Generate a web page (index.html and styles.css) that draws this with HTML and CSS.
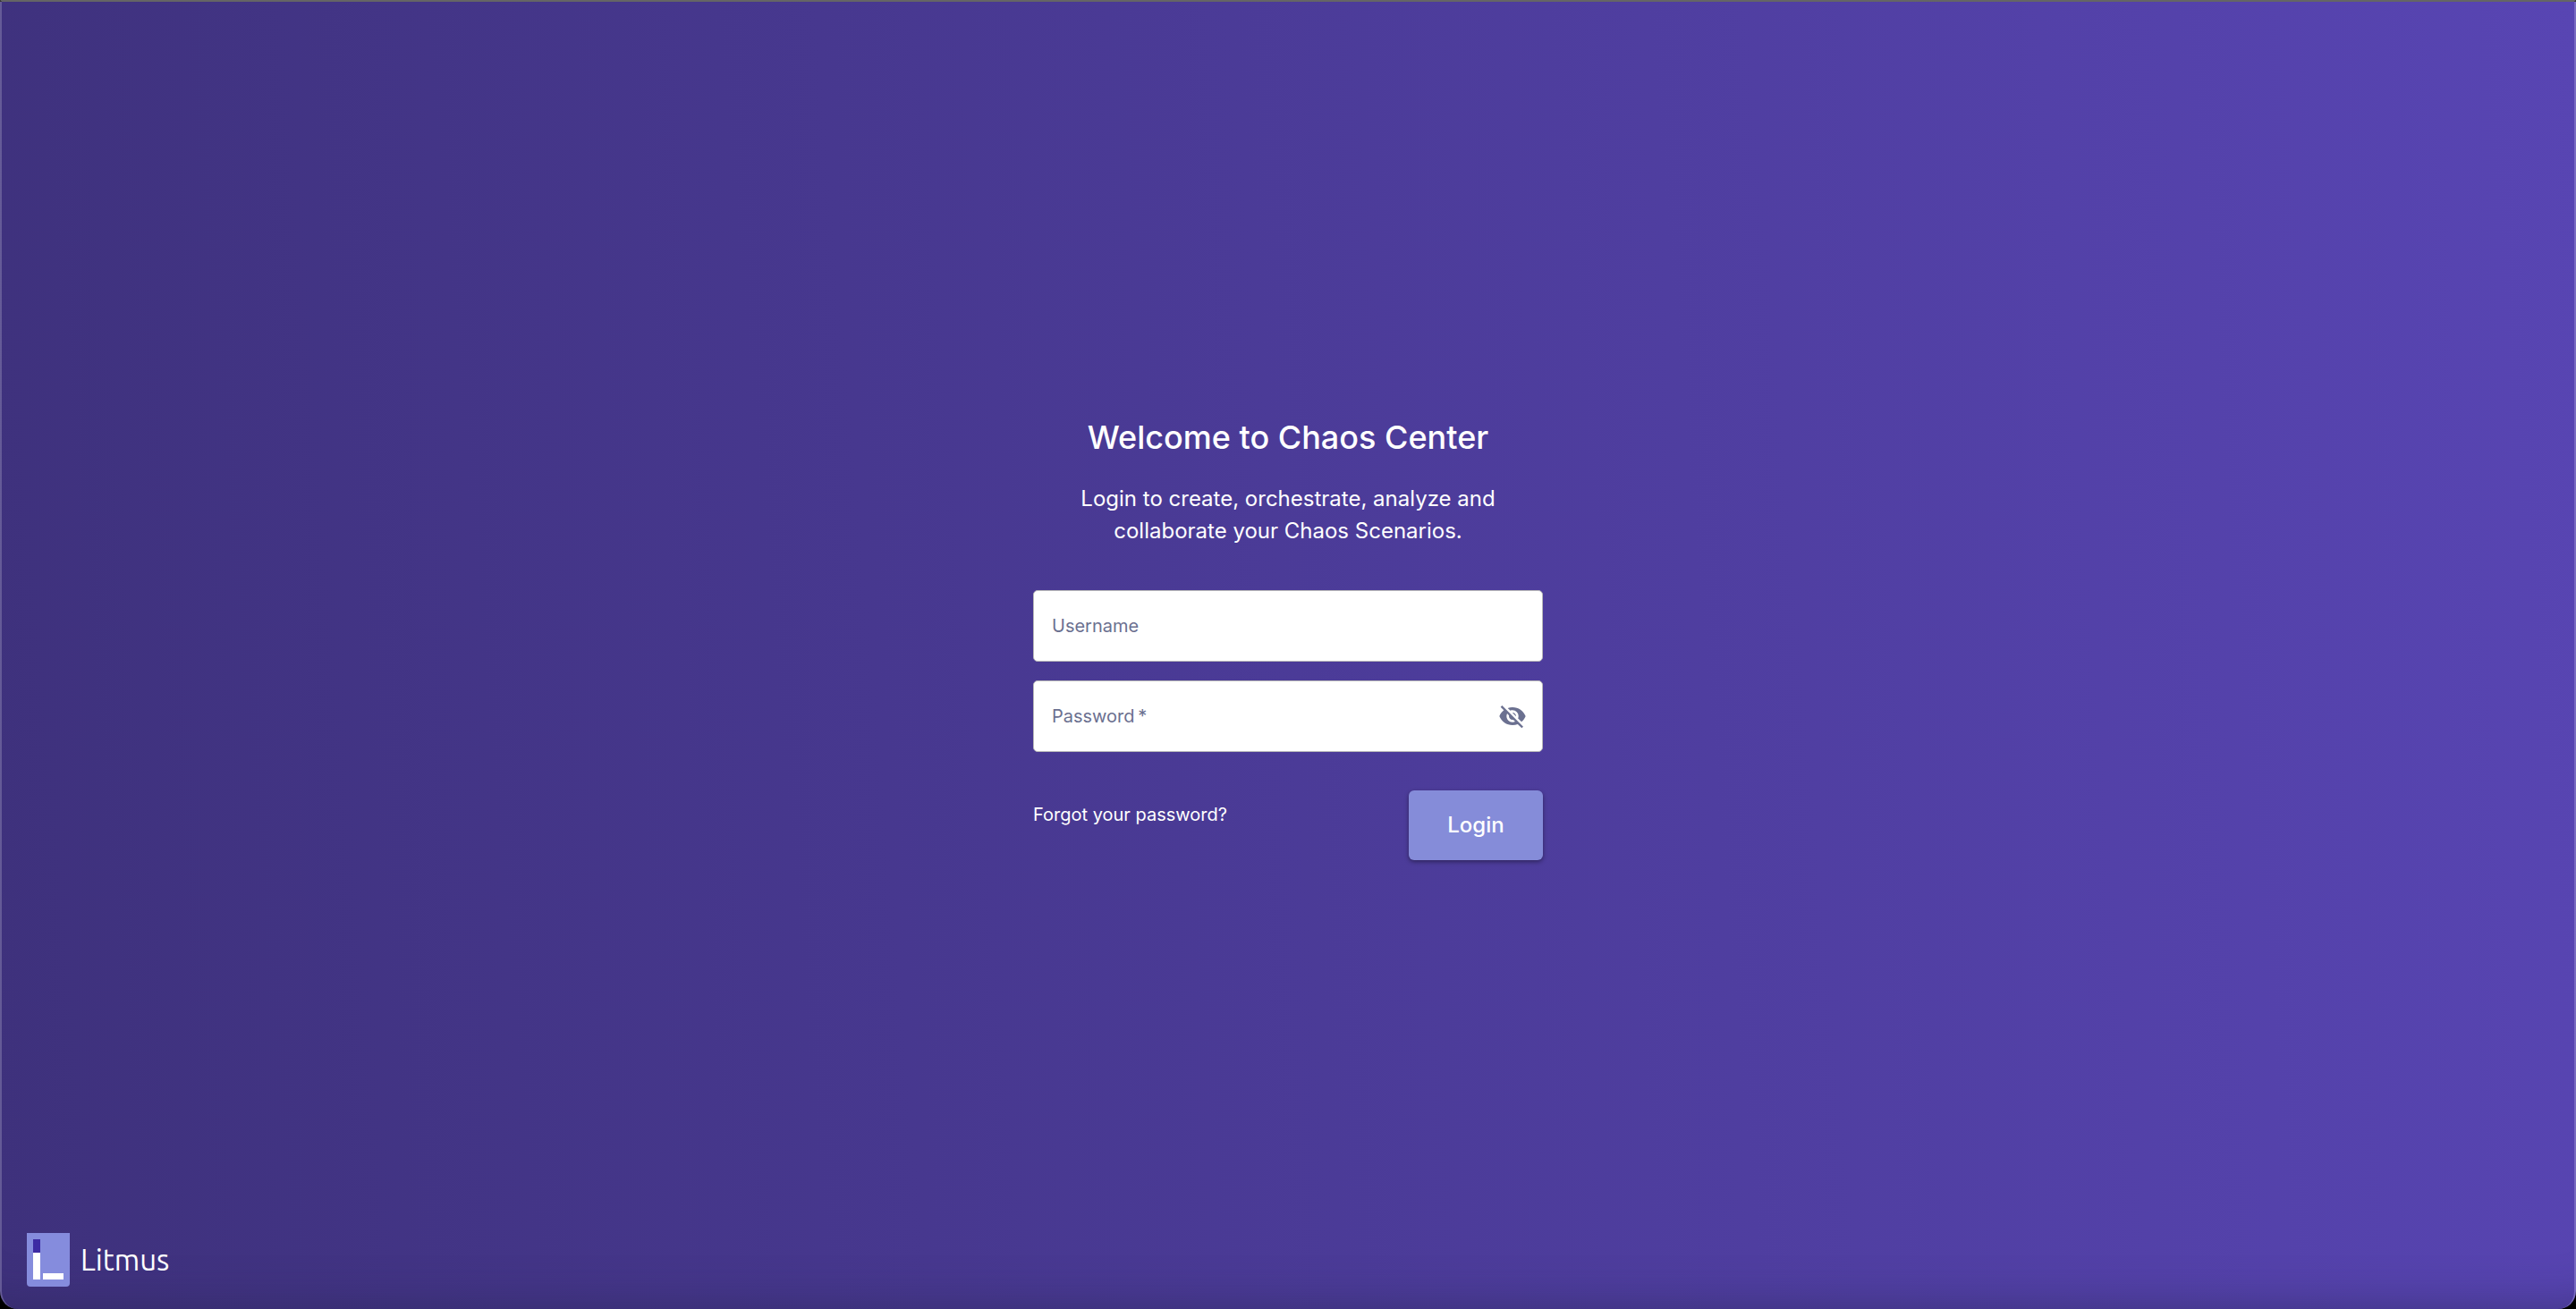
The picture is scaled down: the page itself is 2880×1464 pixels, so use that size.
FILE: index.html
```html
<!DOCTYPE html>
<html lang="en">
<head>
<meta charset="utf-8">
<meta name="viewport" content="width=device-width, initial-scale=1">
<title>Litmus Chaos Center</title>
<link rel="stylesheet" href="styles.css">
</head>
<body>
<div class="page">
  <main class="login">
    <h1 class="title">Welcome to Chaos Center</h1>
    <p class="subtitle">Login to create, orchestrate, analyze and<br>collaborate your Chaos Scenarios.</p>
    <form class="form">
      <div class="field">
        <input class="field-input" id="username" type="text" placeholder=" ">
        <label class="field-label" for="username">Username</label>
      </div>
      <div class="field">
        <input class="field-input" id="password" type="password" placeholder=" " required>
        <label class="field-label" for="password">Password&#8201;*</label>
        <button class="toggle" type="button" aria-label="Show password">
          <svg class="toggle-icon" viewBox="0 0 24 24" aria-hidden="true"><path d="M12 7c2.760 0 5 2.240 5 5 0 .650-.130 1.260-.360 1.830l2.920 2.920c1.510-1.260 2.700-2.890 3.430-4.750-1.730-4.390-6-7.500-11-7.500-1.400 0-2.740.250-3.980.700l2.160 2.160C10.740 7.130 11.350 7 12 7zM2 4.270l2.280 2.280.460.460C3.080 8.300 1.780 10.020 1 12c1.730 4.390 6 7.500 11 7.500 1.550 0 3.030-.300 4.380-.840l.420.420L19.730 22 21 20.730 3.270 3 2 4.270zM7.530 9.800l1.550 1.550c-.050.210-.080.430-.080.650 0 1.660 1.340 3 3 3 .220 0 .440-.030.650-.080l1.550 1.550c-.670.330-1.410.530-2.200.530-2.760 0-5-2.240-5-5 0-.790.200-1.530.530-2.200zm4.310-.780l3.150 3.150.020-.160c0-1.660-1.340-3-3-3l-.170.010z"/></svg>
        </button>
      </div>
      <div class="actions">
        <a class="forgot" href="#forgot">Forgot your password?</a>
        <button class="submit" type="submit">Login</button>
      </div>
    </form>
  </main>
  <footer class="brand">
    <svg class="brand-mark" viewBox="0 0 48 60" aria-hidden="true">
      <path fill="#858cdd" d="M0 0h48v56a4 4 0 0 1-4 4H4a4 4 0 0 1-4-4z"/>
      <path fill="#3d2ba3" d="M7 7h8v15H7z"/>
      <path fill="#fff" d="M7 22h8v30H7zM18 45h23v7H18z"/>
    </svg>
    <span class="brand-name">Litmus</span>
  </footer>
</div>
</body>
</html>
```
FILE: styles.css
```css
* {
  box-sizing: border-box;
}

body {
  margin: 0;
  background: #000;
  font-family: Inter, sans-serif;
  color: #fff;
}

.page {
  min-height: 100vh;
  display: flex;
  flex-direction: column;
  border: 2px solid rgba(255, 255, 255, 0.2);
  border-top-color: #656565;
  border-bottom: 0;
  border-radius: 0 0 20px 20px;
  background: linear-gradient(85deg, #3e317c, #5845b3) border-box;
  box-shadow: inset 0 -60px 50px -60px rgba(40, 35, 80, 0.5);
}

.login {
  flex: 1;
  display: flex;
  flex-direction: column;
  align-items: center;
  justify-content: center;
  padding-top: 46px;
}

.title {
  margin: 0;
  font-size: 36px;
  line-height: 48px;
  font-weight: 500;
}

.subtitle {
  margin: 27px 0 48px;
  font-size: 24px;
  line-height: 36px;
  text-align: center;
}

.form {
  width: 570px;
  display: flex;
  flex-direction: column;
  gap: 21px;
}

.field {
  position: relative;
  height: 80px;
  display: flex;
  align-items: center;
  padding: 0 14px 0 20px;
  border: 1px solid #b9b9b9;
  border-radius: 5px;
  background: #fff;
}

.field-input {
  position: absolute;
  inset: 0;
  width: 100%;
  padding: 0 70px 0 20px;
  border: 0;
  border-radius: 5px;
  background: none;
  font: inherit;
  font-size: 20px;
  color: #1c0732;
}

.field-label {
  position: relative;
  flex: 1;
  font-size: 20px;
  line-height: 24px;
  color: #6b7090;
  pointer-events: none;
}

.field-input:not(:placeholder-shown) + .field-label {
  visibility: hidden;
}

.toggle {
  position: relative;
  display: flex;
  padding: 3px;
  border: 0;
  background: none;
  color: #6b7090;
}

.toggle-icon {
  width: 32px;
  height: 32px;
  fill: currentColor;
}

.actions {
  display: flex;
  justify-content: space-between;
  align-items: flex-start;
  padding-top: 22px;
}

.forgot {
  padding-top: 14px;
  font-size: 20px;
  line-height: 26px;
  color: #fff;
  text-decoration: none;
}

.submit {
  width: 150px;
  height: 78px;
  border: 0;
  border-radius: 6px;
  background: #858cd9;
  box-shadow: 0 2px 5px rgba(0, 0, 0, 0.4);
  font: 500 24px/36px Inter, sans-serif;
  color: #fff;
}

.brand {
  display: flex;
  align-items: center;
  gap: 12px;
  padding: 0 28px 25px;
}

.brand-mark {
  width: 48px;
  height: 60px;
}

.brand-name {
  font: 33px/48px Ubuntu, Lato, sans-serif;
}
```
